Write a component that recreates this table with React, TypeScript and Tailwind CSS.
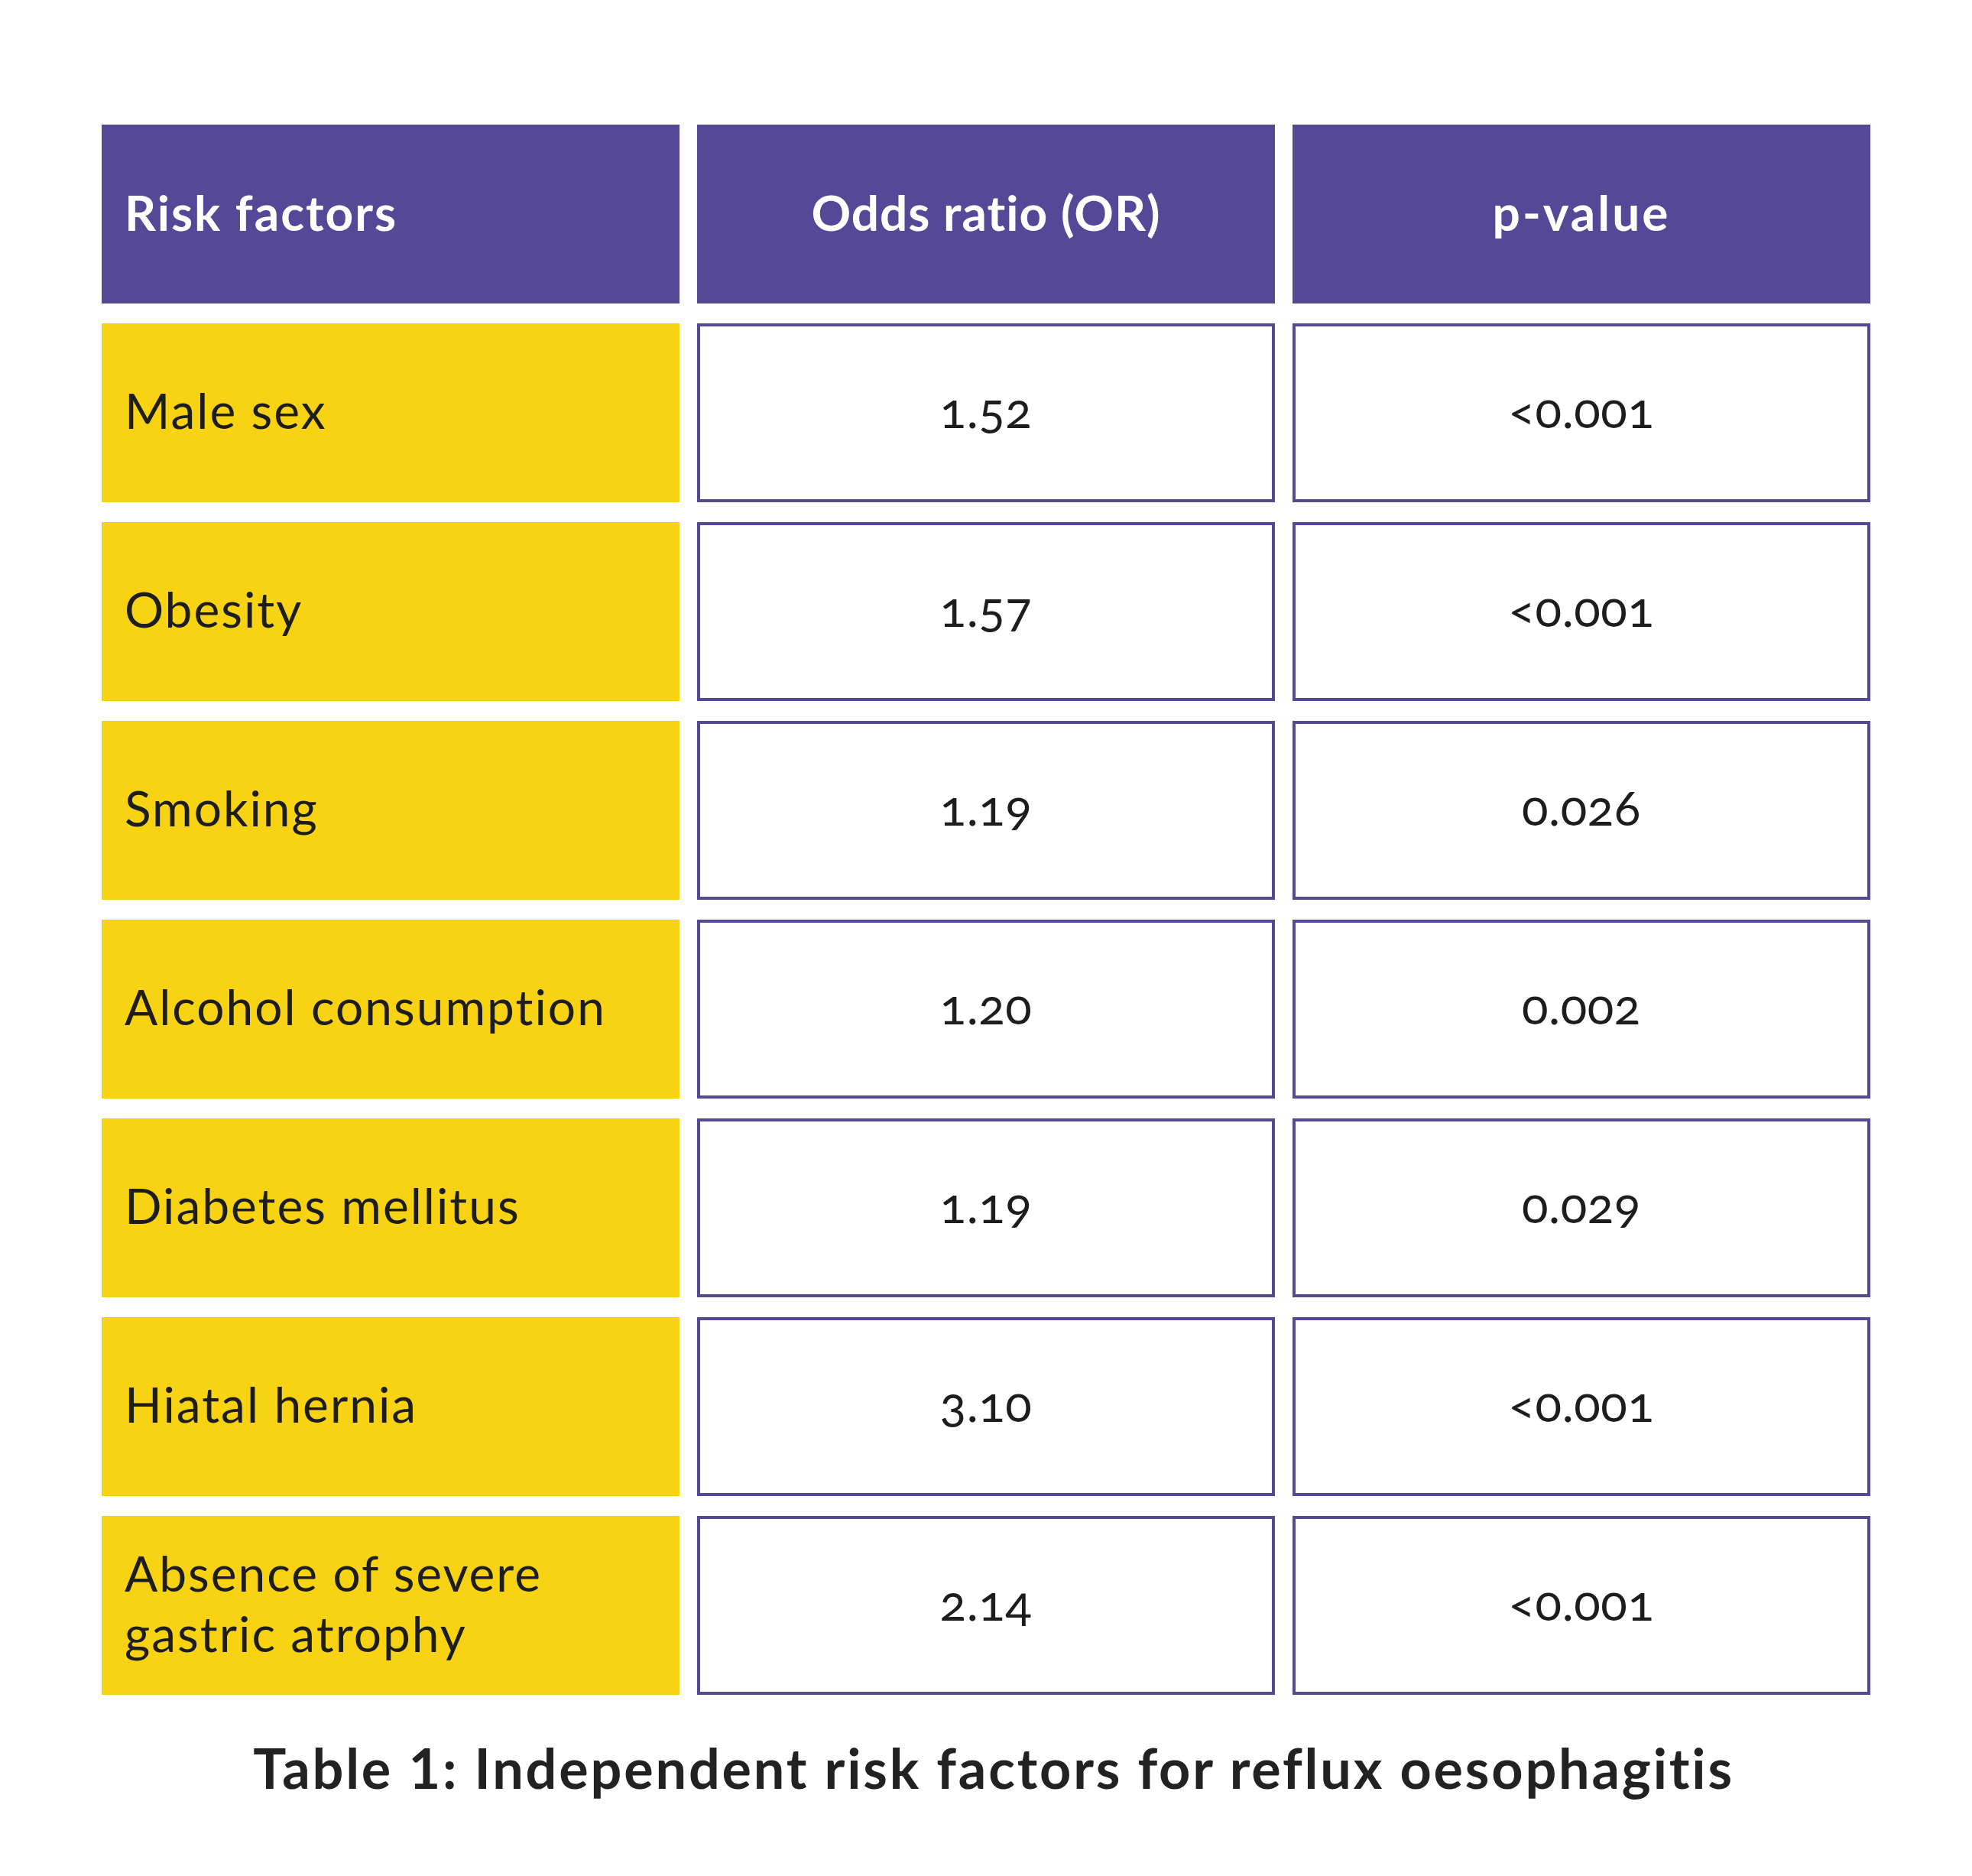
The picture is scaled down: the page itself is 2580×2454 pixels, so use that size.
import React from 'react'

interface Row {
  factor: string[]
  or: string
  p: string
}

const rows: Row[] = [
  { factor: ['Male sex'], or: '1.52', p: '<0.001' },
  { factor: ['Obesity'], or: '1.57', p: '<0.001' },
  { factor: ['Smoking'], or: '1.19', p: '0.026' },
  { factor: ['Alcohol consumption'], or: '1.20', p: '0.002' },
  { factor: ['Diabetes mellitus'], or: '1.19', p: '0.029' },
  { factor: ['Hiatal hernia'], or: '3.10', p: '<0.001' },
  { factor: ['Absence of severe', 'gastric atrophy'], or: '2.14', p: '<0.001' },
]

const App: React.FC = () => {
  return (
    <div className="min-h-[2454px] w-[2580px] bg-white pt-[163px] px-[133px] font-['Lato','Open_Sans',sans-serif] text-[#1d1d1b]">
      {/* Table */}
      <div className="grid grid-cols-[756px_756px_756px] gap-x-[23px] gap-y-[26px] auto-rows-[234px]">
        <div className="bg-[#554896] flex items-center pl-[30px] pb-[5px] text-white text-[64px] font-bold tracking-[2px]">
          Risk factors
        </div>
        <div className="bg-[#554896] flex items-center justify-center pb-[5px] text-white text-[64px] font-bold tracking-[1px]">
          Odds ratio (OR)
        </div>
        <div className="bg-[#554896] flex items-center justify-center pb-[5px] text-white text-[64px] font-bold tracking-[3px]">
          p-value
        </div>

        {rows.map((row, index) => (
          <React.Fragment key={index}>
            <div className="bg-[#f7d313] flex flex-col justify-center pl-[30px] pb-[5px] text-[64px] leading-[1.23] tracking-[2px]">
              {row.factor.map((line, i) => (
                <span key={i}>{line}</span>
              ))}
            </div>
            <div className="border-4 border-[#554896] bg-white flex items-center justify-center pb-[8px] text-[64px] oldstyle-nums tracking-[0.5px]">
              {row.or}
            </div>
            <div className="border-4 border-[#554896] bg-white flex items-center justify-center pb-[8px] text-[64px] oldstyle-nums tracking-[0.5px]">
              {row.p}
            </div>
          </React.Fragment>
        ))}
      </div>

      {/* Caption */}
      <div className="mt-[59px] text-center text-[72px] font-bold leading-none text-[#222222] pl-[20px] tracking-[2.8px]">
        Table 1: Independent risk factors for reflux oesophagitis
      </div>
    </div>
  )
}

export default App
